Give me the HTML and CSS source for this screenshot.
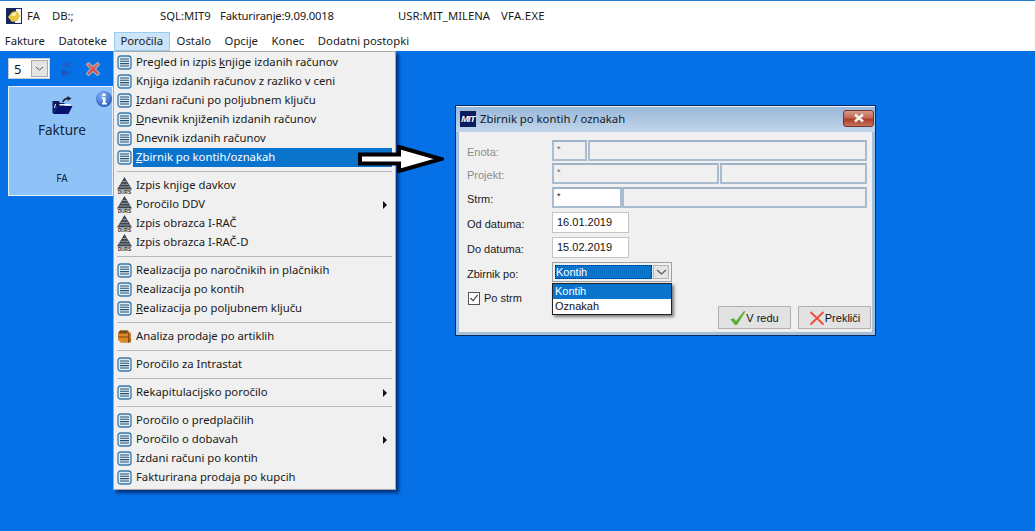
FILE: index.html
```html
<!DOCTYPE html>
<html lang="sl">
<head>
<meta charset="utf-8">
<title>FA</title>
<link rel="stylesheet" href="styles.css">
</head>
<body>
<svg class="defs" width="0" height="0" aria-hidden="true">
  <symbol id="doc" viewBox="0 0 15 15">
    <rect x="1" y="1" width="13" height="13" rx="2.500" fill="#dfeaf5" stroke="#3a78a8" stroke-width="1.300"/>
    <path d="M3 4h9M3 6.300h9M3 8.600h9M3 11h9" stroke="#23506f" stroke-width="1.100"/>
  </symbol>
  <symbol id="durs-mark" viewBox="0 0 17 17">
    <path d="M8.500 0 16 12.500H1Z" fill="#3f444d"/>
    <path d="M6.500 4.500H10.500M4.800 7.300H12.200M3.200 10H13.800" stroke="#aab0b8" stroke-width=".8"/>
  </symbol>
</svg>
<header class="titlebar">
  <svg class="app-icon" viewBox="0 0 16 16"><rect width="16" height="16" fill="#16255a"/><path d="M10 1h5v14H9Z" fill="#f4f6fa"/><path d="M2 9 6 4l5-1 3 5-3 5-5 1Z" fill="#e8c840"/><path d="M5 8 7.500 5l3-.6-1.500 3.600Z" fill="#fff4b0"/></svg>
  <span class="t-fa">FA</span>
  <span class="t-db">DB:;</span>
  <span class="t-sql">SQL:MIT9</span>
  <span class="t-fak">Fakturiranje:9.09.0018</span>
  <span class="t-usr">USR:MIT_MILENA</span>
  <span class="t-exe">VFA.EXE</span>
</header>
<nav class="menubar">
  <span class="mb-item">Fakture</span>
  <span class="mb-item">Datoteke</span>
  <span class="mb-item is-open">Poročila</span>
  <span class="mb-item">Ostalo</span>
  <span class="mb-item">Opcije</span>
  <span class="mb-item">Konec</span>
  <span class="mb-item">Dodatni postopki</span>
</nav>
<main class="desktop">
  <div class="toolbar">
    <div class="num-select"><span class="num-val">5</span><span class="num-btn"><svg width="9" height="5" viewBox="0 0 9 5"><path d="M1 1l3.500 3L8 1" fill="none" stroke="#555" stroke-width="1"/></svg></span></div>
    <svg class="tb-refresh" viewBox="0 0 18 18"><path d="M4 8C5 4 8 2 12 3l2-2v7H8l2-2C8 5.500 6 6 4 8Z" fill="#1f5fc8"/><path d="M14 10c-1 4-4 6-8 5l-2 2v-7h6l-2 2c2 .5 4 0 6-2Z" fill="#1a58bc"/></svg>
    <svg class="tb-close" viewBox="0 0 18 18"><defs><linearGradient id="xg" x1="0" y1="0" x2="0" y2="1"><stop offset="0" stop-color="#f0705c"/><stop offset="1" stop-color="#d8352c"/></linearGradient></defs><path d="M2.500 4.500 4.500 2.500 9 6.500 13.500 2.500 15.500 4.500 11.500 9 15.500 13.500 13.500 15.500 9 11.500 4.500 15.500 2.500 13.500 6.500 9Z" fill="url(#xg)" stroke="#9aa4b4" stroke-width="1.400" stroke-linejoin="round"/></svg>
  </div>
  <section class="card">
    <svg class="card-folder" viewBox="0 0 22 20"><path d="M1 17V5h6l2 2h4v3H6L2 17Z" fill="#0c1a5e"/><path d="M1.500 18 6 10h15l-4 8Z" fill="#0a1270"/><path d="M4 8 3 12" stroke="#fff" stroke-width="1"/><path d="M11 6c2-3 4-4 6-3.500" fill="none" stroke="#1c2430" stroke-width="1.500"/><path d="M16 0l4 2.500-4 2.500Z" fill="#1c2430"/><path d="M8 8h11v1.500H8Z" fill="#fff"/></svg>
    <div class="card-title">Fakture</div>
    <div class="card-code">FA</div>
  </section>
  <svg class="info" viewBox="0 0 16 16"><defs><radialGradient id="ig" cx=".4" cy=".3" r=".8"><stop offset="0" stop-color="#8ab8f5"/><stop offset="1" stop-color="#1c4fb8"/></radialGradient></defs><circle cx="8" cy="8" r="8" fill="url(#ig)"/><rect x="6.500" y="2.500" width="3" height="2.500" fill="#fff"/><path d="M6 6.500h3.500V12H11v1.500H6V12h1V8H6Z" fill="#fff"/></svg>

  <ul class="menu">
    <li class="mi"><svg class="mi-icon"><use href="#doc"/></svg><span class="mi-text">Pregled in izpis <u>k</u>njige izdanih računov</span></li>
    <li class="mi"><svg class="mi-icon"><use href="#doc"/></svg><span class="mi-text">Knji<u>g</u>a izdanih računov z razliko v ceni</span></li>
    <li class="mi"><svg class="mi-icon"><use href="#doc"/></svg><span class="mi-text"><u>I</u>zdani računi po poljubnem ključu</span></li>
    <li class="mi"><svg class="mi-icon"><use href="#doc"/></svg><span class="mi-text"><u>D</u>nevnik knjiženih izdanih računov</span></li>
    <li class="mi"><svg class="mi-icon"><use href="#doc"/></svg><span class="mi-text">Dnevnik izdanih računov</span></li>
    <li class="mi is-active"><svg class="mi-icon"><use href="#doc"/></svg><span class="mi-text"><u>Z</u>birnik po kontih/oznakah</span></li>
    <li class="sep"></li>
    <li class="mi"><svg class="durs-icon" viewBox="0 0 17 17"><use href="#durs-mark" width="17" height="17"/><text class="durs-label" x="8.500" y="16.800" text-anchor="middle">DURS</text></svg><span class="mi-text">Izpis knjige davkov</span></li>
    <li class="mi"><svg class="durs-icon" viewBox="0 0 17 17"><use href="#durs-mark" width="17" height="17"/><text class="durs-label" x="8.500" y="16.800" text-anchor="middle">DURS</text></svg><span class="mi-text">Poročilo DDV</span><i class="sub"></i></li>
    <li class="mi"><svg class="durs-icon" viewBox="0 0 17 17"><use href="#durs-mark" width="17" height="17"/><text class="durs-label" x="8.500" y="16.800" text-anchor="middle">DURS</text></svg><span class="mi-text">Izpis obrazca I-RAČ</span></li>
    <li class="mi"><svg class="durs-icon" viewBox="0 0 17 17"><use href="#durs-mark" width="17" height="17"/><text class="durs-label" x="8.500" y="16.800" text-anchor="middle">DURS</text></svg><span class="mi-text">Izpis obrazca I-RAČ-D</span></li>
    <li class="sep"></li>
    <li class="mi"><svg class="mi-icon"><use href="#doc"/></svg><span class="mi-text">Realizacija po naročnikih in plačnikih</span></li>
    <li class="mi"><svg class="mi-icon"><use href="#doc"/></svg><span class="mi-text">Realizacija po kontih</span></li>
    <li class="mi"><svg class="mi-icon"><use href="#doc"/></svg><span class="mi-text"><u>R</u>ealizacija po poljubnem ključu</span></li>
    <li class="sep"></li>
    <li class="mi"><svg class="mi-icon" viewBox="0 0 15 15"><path d="M3 1.500h8l3 3v9H4L1 10.500V4.500Z" fill="#c47a24"/><path d="M1 4.500h10.500v9H4L1 10.500Z" fill="#d98a2c"/><path d="M3 1.500h8l-1 3H1Z" fill="#7a4a14"/><path d="M1 8h10.500M11.500 4.500v9L14 10" fill="none" stroke="#7a4210" stroke-width=".9"/></svg><span class="mi-text">Analiza prodaje po artiklih</span></li>
    <li class="sep"></li>
    <li class="mi"><svg class="mi-icon"><use href="#doc"/></svg><span class="mi-text">Poročilo za Intrastat</span></li>
    <li class="sep"></li>
    <li class="mi"><svg class="mi-icon"><use href="#doc"/></svg><span class="mi-text">Rekapitulacijsko poročilo</span><i class="sub"></i></li>
    <li class="sep"></li>
    <li class="mi"><svg class="mi-icon"><use href="#doc"/></svg><span class="mi-text">Poročilo o predplačilih</span></li>
    <li class="mi"><svg class="mi-icon"><use href="#doc"/></svg><span class="mi-text">Poročilo o dobavah</span><i class="sub"></i></li>
    <li class="mi"><svg class="mi-icon"><use href="#doc"/></svg><span class="mi-text">Izdani računi po kontih</span></li>
    <li class="mi"><svg class="mi-icon"><use href="#doc"/></svg><span class="mi-text">Fakturirana prodaja po kupcih</span></li>
  </ul>

  <svg class="arrow" viewBox="0 0 86 28"><path d="M2 9.500H41V2L83 14 41 26V18.500H2Z" fill="#fff" stroke="#000" stroke-width="4"/></svg>

  <section class="dialog">
    <div class="dlg-title">
      <span class="mit">MIT</span>
      <span class="dlg-caption">Zbirnik po kontih / oznakah</span>
      <span class="dlg-close"><svg width="14" height="10" viewBox="0 0 14 10"><path d="M3 1.500l8 7M11 1.500l-8 7" stroke="#f4f0ee" stroke-width="2.600"/></svg></span>
    </div>
    <div class="dlg-body">
      <div class="row row-enota">
        <label class="lbl is-dim">Enota:</label>
        <span class="fld is-off w-35">*</span><span class="fld is-off w-280"></span>
      </div>
      <div class="row row-projekt">
        <label class="lbl is-dim">Projekt:</label>
        <span class="fld is-off w-167">*</span><span class="fld is-off w-147"></span>
      </div>
      <div class="row row-strm">
        <label class="lbl">Strm:</label>
        <span class="fld is-on w-70">*</span><span class="fld is-off w-245"></span>
      </div>
      <div class="row row-od">
        <label class="lbl">Od datuma:</label>
        <span class="date">16.01.2019</span>
      </div>
      <div class="row row-do">
        <label class="lbl">Do datuma:</label>
        <span class="date">15.02.2019</span>
      </div>
      <div class="row row-zb">
        <label class="lbl">Zbirnik po:</label>
        <div class="combo">
          <span class="combo-val"><span class="combo-focus">Kontih</span></span>
          <span class="combo-btn"><svg width="11" height="6" viewBox="0 0 11 6"><path d="M1 1l4.500 4L10 1" fill="none" stroke="#555" stroke-width="1.100"/></svg></span>
          <ul class="drop">
            <li class="drop-item is-sel">Kontih</li>
            <li class="drop-item">Oznakah</li>
          </ul>
        </div>
      </div>
      <div class="row-bottom">
        <label class="check"><span class="box"><svg width="11" height="10" viewBox="0 0 11 10"><path d="M1.500 5 4.500 8 9.500 1.500" fill="none" stroke="#444" stroke-width="1.300"/></svg></span>Po strm</label>
        <div class="btns">
          <button class="btn"><svg class="btn-icon" viewBox="0 0 16 16"><path d="M0.500 9.500 3.500 8 6 11 14 1l1.500.5L7 15H5Z" fill="#5cae38"/></svg>V redu</button>
          <button class="btn"><svg class="btn-icon" viewBox="0 0 16 16"><path d="M1.500 2 14.500 14.500M14.500 2 1.500 14.500" stroke="#ee4a36" stroke-width="1.800"/></svg>Prekliči</button>
        </div>
      </div>
    </div>
  </section>
</main>
</body>
</html>
```

FILE: styles.css
```css
* { box-sizing: border-box; }
html, body { height: 100%; }
body {
  margin: 0;
  display: flex;
  flex-direction: column;
  overflow: hidden;
  background: #fff;
  color: #1a1a1a;
  font: 11.3px/16px "Noto Sans", "Open Sans", sans-serif;
}
.defs { position: absolute; }
ul { list-style: none; margin: 0; padding: 0; }
u { text-underline-offset: 1px; }
.durs-label { font: bold 4.600px "Liberation Sans", sans-serif; fill: #222; }

.titlebar {
  height: 32px;
  flex: none;
  position: relative;
  border-top: 1px solid #1f7fd0;
  display: flex;
  align-items: center;
  padding-left: 6px;
  padding-bottom: 2px;
  white-space: nowrap;
}
.app-icon { width: 16px; height: 16px; flex: none; margin-right: 5px; }
.t-fa { width: 25px; }
.t-db { width: 108px; }
.t-sql { width: 60px; }
.t-fak { width: 178px; letter-spacing: -.2px; }
.t-usr { width: 103px; }
.t-exe { letter-spacing: .3px; }

.menubar {
  height: 19px;
  flex: none;
  display: flex;
  margin-left: -2px;
  background: #fff;
}
.mb-item { padding: 1px 6.800px 0; white-space: nowrap; }
.mb-item.is-open { background: #cce4f7; box-shadow: inset 0 0 0 1px #99cdf0; }

.desktop {
  flex: 1;
  position: relative;
  background: #0670e6;
}
.toolbar {
  display: flex;
  align-items: center;
  height: 21px;
  margin: 7px 0 0 8px;
}
.num-select {
  width: 42px;
  height: 21px;
  background: #fff;
  border: 1px solid #c8cdd4;
  display: flex;
  align-items: center;
  justify-content: space-between;
  padding: 1px;
}
.num-val { padding-left: 4px; font-size: 13px; color: #111; }
.num-btn {
  width: 17px;
  height: 17px;
  background: #e4e4e4;
  border: 1px solid #aaa;
  display: flex;
  align-items: center;
  justify-content: center;
}
.tb-refresh { width: 18px; height: 18px; margin-left: 7px; }
.tb-close { width: 18px; height: 18px; margin-left: 9px; }

.card {
  width: 105px;
  height: 110px;
  margin: 7px 0 0 8px;
  background: #8fc2f7;
  border: 1px solid #e6f0fb;
  display: flex;
  flex-direction: column;
  align-items: center;
  padding: 9px 0 0 3px;
}
.card-folder { width: 23px; height: 20px; }
.card-title { font-size: 13.500px; line-height: 18px; margin-top: 5px; color: #12263c; }
.card-code { font-size: 10px; line-height: 12px; margin-top: 33px; color: #12263c; }
.info { position: absolute; left: 96px; top: 40px; width: 16px; height: 16px; }

.menu {
  position: absolute;
  left: 113px;
  top: 0;
  width: 283px;
  height: 439px;
  padding: 1px 2px;
  background: #f0f0f0;
  border: 1px solid #a8a8a8;
  box-shadow: 3px 3px 3px rgba(0, 0, 50, .55);
}
.mi {
  height: 19px;
  display: flex;
  align-items: center;
  position: relative;
  padding-left: 1px;
  white-space: nowrap;
}
.mi-icon { width: 15px; height: 15px; flex: none; }
.durs-icon { width: 17px; height: 17px; flex: none; margin: 0 -1px; }
.mi-text { margin-left: 2px; padding: 0 0 2px 2px; flex: 1; line-height: 17px; }
.sub {
  position: absolute;
  left: 267px;
  top: 6px;
  border-left: 4px solid #111;
  border-top: 4px solid transparent;
  border-bottom: 4px solid transparent;
}
.sep { height: 9px; padding-top: 4px; margin: 0 1px; }
.sep::before { content: ""; display: block; height: 1px; background: #b8b8b8; }
.is-active .mi-text { background: #0a74cc; color: #fff; margin-left: 1px; padding-left: 3px; margin-right: 1px; }

.arrow { position: absolute; left: 358px; top: 94px; width: 86px; height: 28px; }

.dialog {
  position: absolute;
  left: 455px;
  top: 54px;
  width: 421px;
  height: 231px;
  background: #f0f0f0;
  border: 1px solid #0e2a5a;
  box-shadow: inset 0 0 0 3px #a3bfdc;
  display: flex;
  flex-direction: column;
}
.dlg-title {
  height: 26px;
  flex: none;
  display: flex;
  align-items: center;
  padding: 0 1px 0 3px;
  background: linear-gradient(#98b6d8, #c2d6ea);
  box-shadow: inset 0 1px 0 #eaf2fa;
}
.mit {
  width: 16px;
  height: 16px;
  background: #0c1c5c;
  color: #fff;
  font: italic bold 9px/16px "Liberation Sans", sans-serif;
  letter-spacing: -.6px;
  text-align: center;
  flex: none;
  margin-left: 1px;
}
.dlg-caption { margin-left: 4px; flex: 1; color: #0f1a2c; }
.dlg-close {
  width: 31px;
  height: 17px;
  border: 1px solid #6e3830;
  border-radius: 3px;
  background: linear-gradient(#d89a8a, #c06a55 45%, #a93f2a 55%, #c8705c);
  display: flex;
  align-items: center;
  justify-content: center;
  margin-top: -2px;
}
.dlg-body {
  flex: 1;
  padding: 8px 8px 0 11px;
  position: relative;
  font: 11px/16px "Liberation Sans", Arial, sans-serif;
}
.row { display: flex; align-items: flex-start; }
.lbl { width: 85px; color: #1a1a1a; padding-top: 4px; line-height: 16px; }
.lbl.is-dim { color: #8c8c8c; }
.row-enota { height: 22px; }
.row-projekt { height: 24px; margin-top: 1px; }
.row-strm { height: 25px; }
.row-od { height: 25px; }
.row-do { height: 25px; }
.row-zb { height: 24px; }
.fld {
  height: 21px;
  border: 2px solid #a9bcd0;
  border-top-color: #9fb2c6;
  font-size: 9px;
  line-height: 12px;
  padding: 1px 3px;
  color: #666;
  background: #f0f0f0;
}
.fld.is-on { background: #fff; color: #111; }
.w-35 { width: 35px; margin-right: 1px; }
.w-280 { width: 279px; }
.w-167 { width: 167px; margin-right: 1px; }
.w-147 { width: 147px; }
.w-70 { width: 70px; }
.w-245 { width: 245px; }
.date {
  width: 77px;
  height: 21px;
  background: #fff;
  border: 1px solid #c4c4c4;
  padding: 1px 4px;
  color: #111;
}
.combo {
  position: relative;
  width: 120px;
  height: 20px;
  background: #f0f0f0;
  border: 1px solid #a0a0a0;
  display: flex;
  padding: 2px;
}
.combo-val { flex: 1; background: #0a74cc; color: #fff; line-height: 14px; min-width: 0; }
.combo-focus { display: block; height: 14px; padding-left: 1px; outline: 1px dotted #222; outline-offset: -1px; }
.combo-btn {
  width: 16px;
  margin-left: 1px;
  background: #e4e4e4;
  border: 1px solid #b4b4b4;
  display: flex;
  align-items: center;
  justify-content: center;
}
.drop {
  position: absolute;
  left: -1px;
  top: 20px;
  width: 120px;
  height: 32px;
  background: #fff;
  border: 1px solid #222;
  box-shadow: 2px 2px 3px rgba(0, 0, 0, .5);
  z-index: 2;
}
.drop-item { height: 15px; line-height: 15px; padding-left: 2px; color: #111; }
.drop-item.is-sel { background: #0a74cc; color: #fff; }
.row-bottom { display: flex; justify-content: space-between; align-items: flex-start; }
.check { display: flex; align-items: center; height: 14px; margin-top: 5px; }
.box {
  width: 12px;
  height: 13px;
  border: 1px solid #555;
  background: #fff;
  margin: 0 4px 0 1px;
  display: flex;
  align-items: center;
  justify-content: center;
}
.btns { display: flex; gap: 7px; margin-top: 20px; margin-right: -4px; }
.btn {
  width: 73px;
  height: 23px;
  background: #e2e2e2;
  border: 1px solid #b0b0b0;
  font: inherit;
  color: #111;
  padding: 0;
  display: flex;
  align-items: center;
  justify-content: center;
}
.btn-icon { width: 16px; height: 16px; }
```
